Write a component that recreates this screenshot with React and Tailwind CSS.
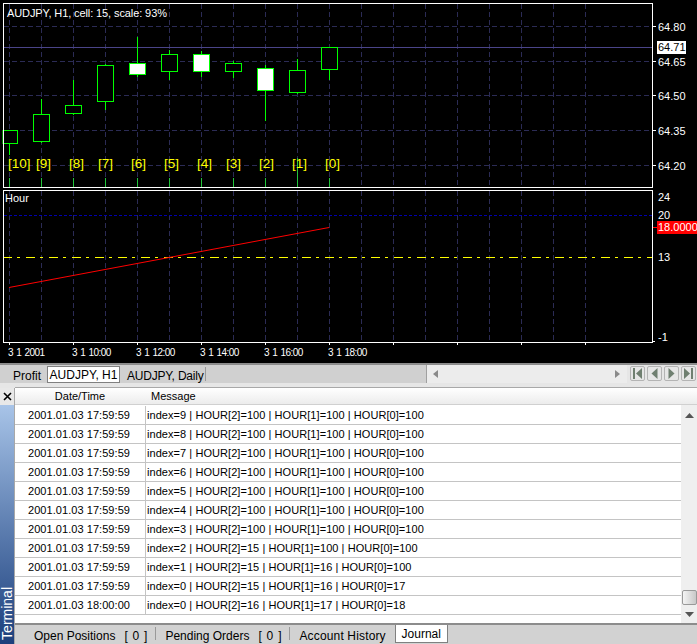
const sans = '"Liberation Sans", Arial, sans-serif';

const candles = [
  { label: '[10]', lx: 8, cx: 9, x1: 3, x2: 17.5, open: 130.5, close: 143.5, hi: 130, lo: 155 },
  { label: '[9]', lx: 36, cx: 41, x1: 33.5, x2: 49.5, open: 114.5, close: 141.5, hi: 99, lo: 143 },
  { label: '[8]', lx: 69, cx: 73, x1: 65.5, x2: 81.5, open: 105.5, close: 113.5, hi: 80, lo: 115 },
  { label: '[7]', lx: 98, cx: 105, x1: 97.5, x2: 113.5, open: 65.5, close: 101.5, hi: 64, lo: 110 },
  { label: '[6]', lx: 131, cx: 137, x1: 129.5, x2: 145.5, open: 63.5, close: 74.5, hi: 37, lo: 77, down: true },
  { label: '[5]', lx: 164, cx: 169, x1: 161.5, x2: 177.5, open: 54.5, close: 71.5, hi: 50, lo: 80 },
  { label: '[4]', lx: 197, cx: 201, x1: 193.5, x2: 209.5, open: 54.5, close: 71.5, hi: 51, lo: 77, down: true },
  { label: '[3]', lx: 226, cx: 233, x1: 225.5, x2: 241.5, open: 63.5, close: 71.5, hi: 61, lo: 78 },
  { label: '[2]', lx: 259, cx: 265, x1: 257.5, x2: 273.5, open: 68.5, close: 90.5, hi: 65, lo: 121, down: true },
  { label: '[1]', lx: 292, cx: 297, x1: 289.5, x2: 305.5, open: 70.5, close: 92.5, hi: 59, lo: 94 },
  { label: '[0]', lx: 325, cx: 329, x1: 321.5, x2: 337.5, open: 47.5, close: 69.5, hi: 47, lo: 80 },
];

const gridX = Array.from({ length: 19 }, (_, i) => 9.5 + i * 32);
const priceY = [
  [26.5, '64.80'],
  [61.5, '64.65'],
  [95.5, '64.50'],
  [130.5, '64.35'],
  [165.5, '64.20'],
];
const timeLabels = [
  [8, '3 1 2001'],
  [72, '3 1 10:00'],
  [136, '3 1 12:00'],
  [200, '3 1 14:00'],
  [264, '3 1 16:00'],
  [328, '3 1 18:00'],
];

function Chart() {
  return (
    <svg width="697" height="363" className="block" style={{ fontFamily: sans, fontSize: 11 }}>
      <rect width="697" height="363" fill="#000" />
      {/* grid */}
      {gridX.map((x) => (
        <g key={x} stroke="#2b2b55" strokeDasharray="5 3">
          <line x1={x} x2={x} y1="4" y2="187" />
          <line x1={x} x2={x} y1="191" y2="342" />
        </g>
      ))}
      {priceY.map(([y]) => (
        <line key={y} x1="4" x2="652" y1={y} y2={y} stroke="#2b2b55" strokeDasharray="5 3" />
      ))}
      <line x1="4" x2="652" y1="47.5" y2="47.5" stroke="#4a4488" />
      {/* bottoms of the tall wicks */}
      {candles.map((c) => (
        <line key={c.label} x1={c.cx + 0.5} x2={c.cx + 0.5} y1={c.label === '[1]' ? 158 : 178} y2="187" stroke="#22c53a" />
      ))}
      {/* candles */}
      {candles.map((c) => (
        <g key={c.label}>
          <line x1={c.cx + 0.5} x2={c.cx + 0.5} y1={c.hi} y2={c.lo} stroke="#00ff00" />
          <rect x={c.x1} y={c.open} width={c.x2 - c.x1} height={c.close - c.open} fill={c.down ? '#fff' : '#000'} stroke="#00ff00" />
          <text x={c.lx} y="168" fill="#ffff00" fontSize="13.5">{c.label}</text>
        </g>
      ))}
      {/* panel frames */}
      <rect x="3.5" y="3.5" width="649" height="184" fill="none" stroke="#fff" />
      <rect x="3.5" y="190.5" width="649" height="152" fill="none" stroke="#fff" />
      <text x="7" y="17" fill="#fff" letterSpacing="-0.1">AUDJPY, H1, cell: 15, scale: 93%</text>
      <text x="5" y="202" fill="#fff">Hour</text>
      {/* indicator */}
      <line x1="4" x2="652" y1="215.5" y2="215.5" stroke="#0000b0" strokeDasharray="3 2" />
      <line x1="4" x2="652" y1="257.5" y2="257.5" stroke="#ffff00" strokeDasharray="9 5 3 6" strokeDashoffset="1" />
      <line x1="9" x2="329" y1="287.5" y2="227.5" stroke="#ff0000" />
      {/* price axis */}
      {priceY.map(([y, t]) => (
        <g key={t}>
          <line x1="653" x2="656" y1={y} y2={y} stroke="#fff" />
          <text x="658" y={y + 4} fill="#fff">{t}</text>
        </g>
      ))}
      <rect x="657" y="41" width="29" height="13" fill="#fff" />
      <text x="658" y="51" fill="#000">64.71</text>
      <text x="658" y="201" fill="#fff">24</text>
      <text x="658" y="219" fill="#fff">20</text>
      <line x1="653" x2="657" y1="227.5" y2="227.5" stroke="#ff0000" />
      <rect x="657" y="221" width="40" height="13" fill="#ff0000" />
      <text x="658" y="231" fill="#fff">18.0000</text>
      <text x="658" y="261" fill="#fff">13</text>
      <text x="658" y="341" fill="#fff">-1</text>
      <line x1="653" x2="655" y1="341.5" y2="341.5" stroke="#fff" />
      {/* time axis */}
      {gridX.filter((_, i) => i % 2 === 0).map((x) => (
        <line key={x} x1={x} x2={x} y1="343" y2="345" stroke="#fff" />
      ))}
      {timeLabels.map(([x, t]) => (
        <text key={t} x={x} y="356" fill="#fff" fontSize="10" letterSpacing="-0.56" wordSpacing="1">{t}</text>
      ))}
    </svg>
  );
}

function NavButton({ d }) {
  return (
    <button className="flex h-[15px] w-[15px] items-center justify-center rounded-[2px] border border-[#b4b4b4] bg-[#e6e6e6]">
      <svg width="13" height="13" viewBox="0 0 13 13" fill="#6f7f70"><path d={d} /></svg>
    </button>
  );
}

function ChartTabs() {
  return (
    <div className="flex h-[25px] flex-col border-t-2 border-[#8c8c8c] bg-[#e6e6e6] text-[12px] text-black">
      <div className="flex h-[18px] shrink-0 whitespace-nowrap bg-[#d0d0d0]">
        <span className="ml-[13px] mt-[2px]">Profit</span>
        <span className="ml-[6px] mt-[1px] flex h-[17px] w-[73px] items-center justify-center border border-[#808080] bg-white">AUDJPY, H1</span>
        <span className="ml-[6px] mt-[2px] w-[79px] pl-px tracking-[-0.2px]">AUDJPY, Daily</span>
        <span className="mt-[2px] h-[14px] w-px bg-[#999]" />
        <div className="w-[221px] border-r border-[#a0a0a0]" />
        <div className="flex h-[18px] w-[200px] items-center justify-between bg-[#ececec] px-[6px]">
          <svg width="6" height="8"><path d="M5 0v8L0 4z" fill="#8a8a8a" /></svg>
          <svg width="6" height="8"><path d="M0 0v8l5-4z" fill="#8a8a8a" /></svg>
        </div>
        <div className="flex flex-1 gap-[2px] bg-[#e6e6e6] pl-[3px] pt-[1px]">
          <NavButton d="M2 1h2v11H2zM11 1v11L5 6.500z" />
          <NavButton d="M9.500 1v11L3.500 6.500z" />
          <NavButton d="M3.500 1v11l6-5.500z" />
          <NavButton d="M2 1v11l6-5.500zM9 1h2v11H9z" />
        </div>
      </div>
      <div className="flex-1" />
      <div className="ml-[15px] h-px bg-[#a8a8a8]" />
    </div>
  );
}

const rows = [
  ['2001.01.03 17:59:59', 'index=9 | HOUR[2]=100 | HOUR[1]=100 | HOUR[0]=100'],
  ['2001.01.03 17:59:59', 'index=8 | HOUR[2]=100 | HOUR[1]=100 | HOUR[0]=100'],
  ['2001.01.03 17:59:59', 'index=7 | HOUR[2]=100 | HOUR[1]=100 | HOUR[0]=100'],
  ['2001.01.03 17:59:59', 'index=6 | HOUR[2]=100 | HOUR[1]=100 | HOUR[0]=100'],
  ['2001.01.03 17:59:59', 'index=5 | HOUR[2]=100 | HOUR[1]=100 | HOUR[0]=100'],
  ['2001.01.03 17:59:59', 'index=4 | HOUR[2]=100 | HOUR[1]=100 | HOUR[0]=100'],
  ['2001.01.03 17:59:59', 'index=3 | HOUR[2]=100 | HOUR[1]=100 | HOUR[0]=100'],
  ['2001.01.03 17:59:59', 'index=2 | HOUR[2]=15 | HOUR[1]=100 | HOUR[0]=100'],
  ['2001.01.03 17:59:59', 'index=1 | HOUR[2]=15 | HOUR[1]=16 | HOUR[0]=100'],
  ['2001.01.03 17:59:59', 'index=0 | HOUR[2]=15 | HOUR[1]=16 | HOUR[0]=17'],
  ['2001.01.03 18:00:00', 'index=0 | HOUR[2]=16 | HOUR[1]=17 | HOUR[0]=18'],
];

function TerminalTabs() {
  return (
    <div className="flex h-[21px] shrink-0 whitespace-nowrap border-t-2 border-[#8c8c8c] bg-[#d2d2d2] pl-[19px] text-[12px] text-black">
      <span className="mt-[2px]">Open Positions</span>
      <span className="ml-[9px] mt-[2px] [word-spacing:1.5px]">[ 0 ]</span>
      <span className="ml-[8px] mt-[2px] h-[13px] w-px bg-[#999]" />
      <span className="ml-[9px] mt-[2px]">Pending Orders</span>
      <span className="ml-[9px] mt-[2px] [word-spacing:1.5px]">[ 0 ]</span>
      <span className="ml-[8px] mt-[2px] h-[13px] w-px bg-[#999]" />
      <span className="ml-[9px] mt-[2px] tracking-[0.15px]">Account History</span>
      <span className="ml-[9px] flex h-[18px] w-[53px] items-center justify-center border border-t-0 border-[#808080] bg-white">Journal</span>
    </div>
  );
}

function Terminal() {
  return (
    <div className="flex h-[256px] text-[11px] text-black">
      <div className="flex w-[15px] shrink-0 flex-col border-r border-[#a8a8a8]">
        <div className="flex h-[17px] shrink-0 items-center justify-center bg-[#e8e8e8]">
          <svg width="9" height="9" stroke="#000" strokeWidth="1.6"><path d="M1 1l7 7M8 1l-7 7" /></svg>
        </div>
        <div className="flex flex-1 items-end justify-center bg-gradient-to-b from-[#a8c4e8] to-[#1c3f7c]">
          <span className="mb-[4px] text-[14px] leading-[14px] text-white [writing-mode:vertical-rl] rotate-180">Terminal</span>
        </div>
      </div>
      <div className="flex min-w-0 flex-1 flex-col">
        <div className="flex h-[17px] shrink-0 items-center border-b border-[#d0d0d0] bg-gradient-to-b from-white to-[#ececec]">
          <span className="w-[130px] text-center">Date/Time</span>
          <span className="ml-[6px]">Message</span>
        </div>
        <div className="flex min-h-0 flex-1">
          <div className="flex-1 bg-white pt-px tracking-[0.06px]">
            {rows.map(([time, msg], i) => (
              <div key={i} className="flex h-[19px] items-center border-b border-[#c4c4c4]">
                <span className="w-[130px] pr-[2px] text-center">{time}</span>
                <span className="flex h-full items-center border-l border-[#c4c4c4] pl-[1px]">{msg}</span>
              </div>
            ))}
          </div>
          <div className="flex w-[16px] shrink-0 flex-col items-center bg-[#efefef]">
            <svg className="mt-[8px]" width="9" height="5"><path d="M4.500 0L9 5H0z" fill="#555" /></svg>
            <div className="mt-[172px] h-[15px] w-[15px] rounded-[2px] border border-[#999] bg-gradient-to-r from-[#f4f4f4] to-[#c8c8c8]" />
            <svg className="mt-[7px]" width="9" height="5"><path d="M0 0h9L4.500 5z" fill="#555" /></svg>
          </div>
        </div>
        <TerminalTabs />
      </div>
    </div>
  );
}

export default function App() {
  return (
    <div className="h-[644px] w-[697px] overflow-hidden bg-[#d0d0d0]" style={{ fontFamily: sans }}>
      <Chart />
      <ChartTabs />
      <Terminal />
    </div>
  );
}
